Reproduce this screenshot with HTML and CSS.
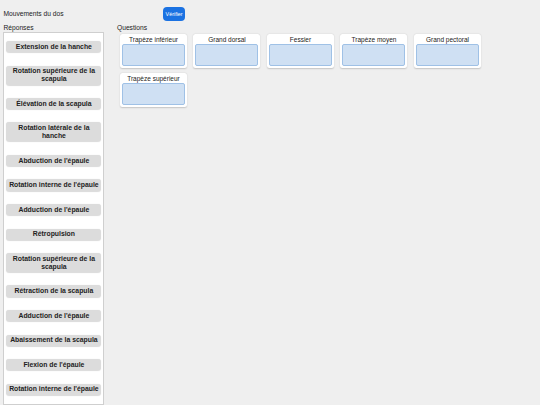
FILE: index.html
```html
<!DOCTYPE html>
<html lang="fr">
<head>
  <meta charset="UTF-8">
  <meta name="viewport" content="width=device-width, initial-scale=1.0">
  <title>Mouvements du dos</title>
  <link rel="stylesheet" href="styles.css">
</head>
<body>
  <!-- En-tête -->
  <div class="topbar">
    <div class="title">Mouvements du dos</div>
    <button class="check-btn">Vérifier</button>
  </div>

  <div class="columns">
    <!-- Réponses à glisser -->
    <div class="answers">
      <div class="label">Réponses</div>
      <div class="answer-list">
        <div class="answer">Extension de la hanche</div>
        <div class="answer">Rotation supérieure de la scapula</div>
        <div class="answer">Élévation de la scapula</div>
        <div class="answer">Rotation latérale de la hanche</div>
        <div class="answer">Abduction de l'épaule</div>
        <div class="answer">Rotation interne de l'épaule</div>
        <div class="answer">Adduction de l'épaule</div>
        <div class="answer">Rétropulsion</div>
        <div class="answer">Rotation supérieure de la scapula</div>
        <div class="answer">Rétraction de la scapula</div>
        <div class="answer">Adduction de l'épaule</div>
        <div class="answer">Abaissement de la scapula</div>
        <div class="answer">Flexion de l'épaule</div>
        <div class="answer">Rotation interne de l'épaule</div>
      </div>
    </div>

    <!-- Muscles (zones de dépôt) -->
    <div class="questions">
      <div class="label">Questions</div>
      <div class="question-grid">
        <div class="question">
          <div class="question-title">Trapèze inférieur</div>
          <div class="dropzone"></div>
        </div>
        <div class="question">
          <div class="question-title">Grand dorsal</div>
          <div class="dropzone"></div>
        </div>
        <div class="question">
          <div class="question-title">Fessier</div>
          <div class="dropzone"></div>
        </div>
        <div class="question">
          <div class="question-title">Trapèze moyen</div>
          <div class="dropzone"></div>
        </div>
        <div class="question">
          <div class="question-title">Grand pectoral</div>
          <div class="dropzone"></div>
        </div>
        <div class="question">
          <div class="question-title">Trapèze supérieur</div>
          <div class="dropzone"></div>
        </div>
      </div>
    </div>
  </div>
</body>
</html>
```

FILE: styles.css
```css
/* Page */
body {
  margin: 0;
  padding: 3px 3px 0 3.4px;
  background: #efefef;
  font-family: 'Liberation Sans', Arial, sans-serif;
  color: #222;
  font-size: 6.7px;
  line-height: 8px;
}

/* En-tête */
.topbar {
  display: flex;
  align-items: center;
  height: 14px;
  margin-top: 4px;
}

.title {
  width: 159.6px;
}

.check-btn {
  height: 14px;
  padding: 0 2.6px;
  border: none;
  border-radius: 4px;
  background: #1b72e2;
  color: #fff;
  font-family: inherit;
  font-size: 5.4px;
  cursor: pointer;
}

/* Colonnes */
.columns {
  display: flex;
  gap: 12.6px;
  margin-top: 3px;
}

.label {
  height: 8px;
}

/* Réponses */
.answers {
  width: 101px;
}

.answer-list {
  display: flex;
  flex-direction: column;
  gap: 13.4px;
  padding: 8px 2px 9.5px;
  background: #fff;
  border: 1px solid #cfcfcf;
}

.answer {
  padding: 1.7px 1px;
  background: #dcdcdc;
  border-radius: 3px;
  box-shadow: 0 0.5px 1px rgba(0, 0, 0, 0.15);
  font-size: 6.85px;
  line-height: 7.8px;
  font-weight: bold;
  text-align: center;
}

/* Questions */
.questions {
  flex: 1;
}

.question-grid {
  display: flex;
  flex-wrap: wrap;
  gap: 5px 6.5px;
  margin-top: 2px;
  padding-left: 3px;
}

.question {
  width: 67px;
  padding: 2px 2px 2px;
  box-sizing: border-box;
  background: #fff;
  border-radius: 2.5px;
  box-shadow: 0 0.5px 1.5px rgba(0, 0, 0, 0.18);
}

.question-title {
  height: 8px;
  text-align: center;
  font-size: 6.5px;
}

.dropzone {
  height: 20px;
  background: #cfe0f3;
  border: 1px solid #9fc1e6;
  border-radius: 2px;
}
```
